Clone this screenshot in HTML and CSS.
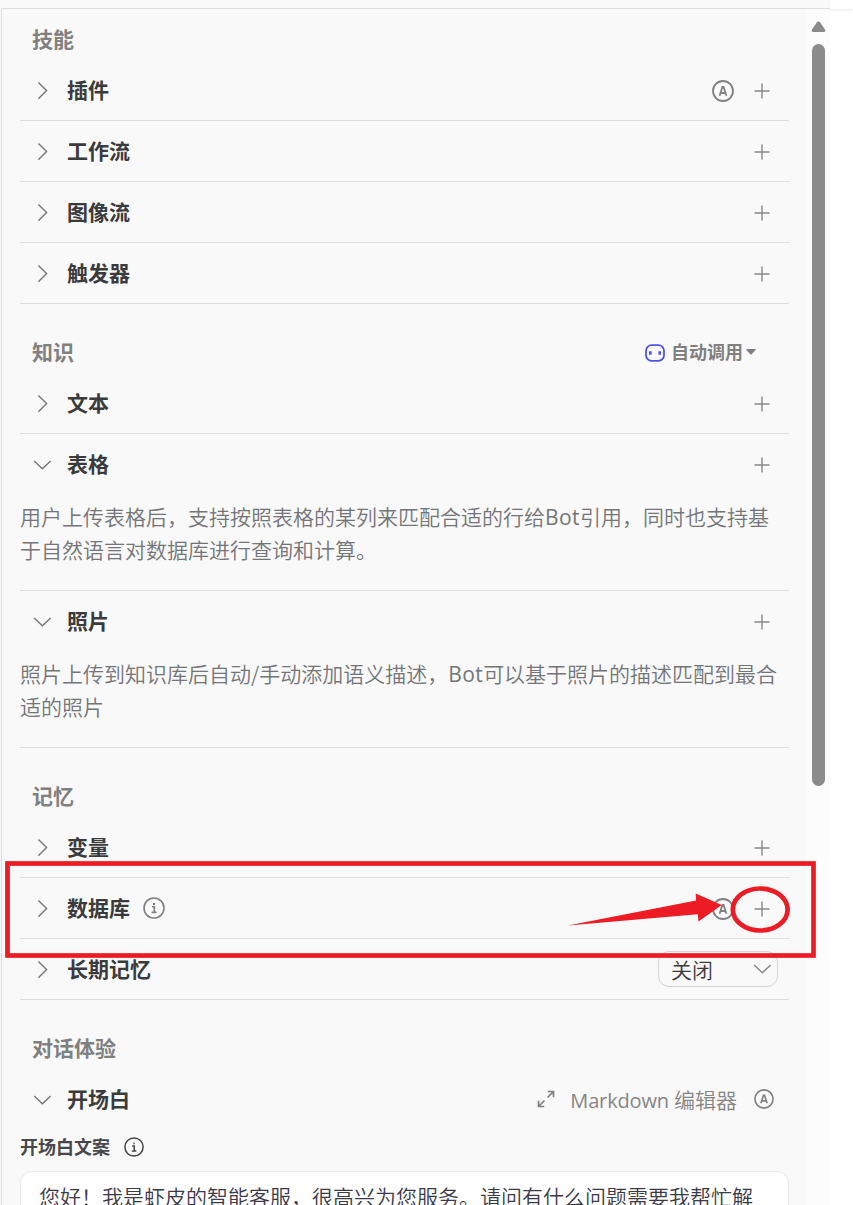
FILE: index.html
```html
<!DOCTYPE html>
<html lang="zh-CN">
<head>
<meta charset="utf-8">
<title>Bot 编排</title>
<link rel="stylesheet" href="styles.css">
</head>
<body>
<svg class="defs" width="0" height="0">
  <symbol id="right" viewBox="0 0 20 20"><path d="M6.4 1.4l8.2 8.2-8.2 8.2"/></symbol>
  <symbol id="down" viewBox="0 0 20 20"><path d="M2.2 5.9l8.2 7.8 8.2-7.8"/></symbol>
  <symbol id="plus" viewBox="0 0 16 16"><path d="M8 .5v15M.5 8h15"/></symbol>
  <symbol id="auto" viewBox="0 0 22 22"><circle cx="11" cy="11" r="10"/><path d="M7.6 15.7L10.4 6.9h1.2l2.8 8.8M8.7 13h4.6"/></symbol>
  <symbol id="info" viewBox="0 0 22 22"><circle cx="11" cy="11" r="10"/><path d="M9 9.8h2.3v5.4M8.6 15.4h5"/><path class="dot" d="M10 6h2v2h-2z"/></symbol>
</svg>
<div class="app">
  <div class="panel">
    <main class="content">
      <section class="section">
        <header class="section-head"><h2>技能</h2></header>
        <div class="row"><svg class="chev"><use href="#right"/></svg><h3>插件</h3><div class="actions"><svg class="auto"><use href="#auto"/></svg><svg class="plus"><use href="#plus"/></svg></div></div>
        <div class="row"><svg class="chev"><use href="#right"/></svg><h3>工作流</h3><div class="actions"><svg class="plus"><use href="#plus"/></svg></div></div>
        <div class="row"><svg class="chev"><use href="#right"/></svg><h3>图像流</h3><div class="actions"><svg class="plus"><use href="#plus"/></svg></div></div>
        <div class="row"><svg class="chev"><use href="#right"/></svg><h3>触发器</h3><div class="actions"><svg class="plus"><use href="#plus"/></svg></div></div>
      </section>
      <section class="section">
        <header class="section-head"><h2>知识</h2>
          <div class="mode">
            <svg class="bot" viewBox="0 0 20 18"><rect x="1" y="1.2" width="18" height="15.6" rx="5.5"/><path d="M5.3 7.2v3.6M14.7 7.2v3.6"/></svg>
            <span>自动调用</span>
            <svg class="caret" viewBox="0 0 10 6"><path d="M.7 0h8.6q.8.2.2 1L5.7 5.2q-.7.7-1.4 0L.5 1q-.6-.8.2-1z"/></svg>
          </div>
        </header>
        <div class="row"><svg class="chev"><use href="#right"/></svg><h3>文本</h3><div class="actions"><svg class="plus"><use href="#plus"/></svg></div></div>
        <div class="row open"><svg class="chev"><use href="#down"/></svg><h3>表格</h3><div class="actions"><svg class="plus"><use href="#plus"/></svg></div></div>
        <p class="desc">用户上传表格后，支持按照表格的某列来匹配合适的行给<span class="latin">Bot</span>引用，同时也支持基<br>于自然语言对数据库进行查询和计算。</p>
        <div class="row open"><svg class="chev"><use href="#down"/></svg><h3>照片</h3><div class="actions"><svg class="plus"><use href="#plus"/></svg></div></div>
        <p class="desc">照片上传到知识库后自动/手动添加语义描述，<span class="latin">Bot</span>可以基于照片的描述匹配到最合<br>适的照片</p>
      </section>
      <section class="section">
        <header class="section-head"><h2>记忆</h2></header>
        <div class="row"><svg class="chev"><use href="#right"/></svg><h3>变量</h3><div class="actions"><svg class="plus"><use href="#plus"/></svg></div></div>
        <div class="row"><svg class="chev"><use href="#right"/></svg><h3>数据库</h3><svg class="info"><use href="#info"/></svg><div class="actions"><svg class="auto"><use href="#auto"/></svg><svg class="plus"><use href="#plus"/></svg></div></div>
        <div class="row"><svg class="chev"><use href="#right"/></svg><h3>长期记忆</h3><div class="select"><span>关闭</span><svg class="select-arrow"><use href="#down"/></svg></div></div>
      </section>
      <section class="section">
        <header class="section-head"><h2>对话体验</h2></header>
        <div class="row open"><svg class="chev"><use href="#down"/></svg><h3>开场白</h3>
          <div class="editor-link">
            <svg class="expand" viewBox="0 0 18 18"><path d="M10.5 7.5L16 2M10.8 1.5h5.7v5.7M7.5 10.5L2 16M1.5 10.8v5.7h5.7"/></svg>
            <span><span class="brand">Markdown</span> 编辑器</span>
            <svg class="auto small" viewBox="0 0 22 22"><use href="#auto"/></svg>
          </div>
        </div>
        <div class="field-label"><span>开场白文案</span><svg class="info dark"><use href="#info"/></svg></div>
        <div class="textbox">您好！我是虾皮的智能客服，很高兴为您服务。请问有什么问题需要我帮忙解</div>
      </section>
    </main>
    <div class="scrollbar">
      <svg class="scroll-up" viewBox="0 0 15 12"><path d="M6 1.2q1.5-1.6 3 0l5.2 7.5q.8 2-1.2 2.3H2q-2-.3-1.2-2.3z"/></svg>
      <div class="thumb"></div>
    </div>
  </div>
  <div class="gutter"></div>
  <svg class="annotation" width="853" height="1205" viewBox="0 0 853 1205">
    <rect x="7.5" y="863.5" width="806" height="92"/>
    <ellipse cx="760.2" cy="909.5" rx="27.4" ry="21"/>
    <path d="M568 925.5L696 900.5L695.7 893.5L721.7 905L698.5 921.5L697.7 914.3z"/>
  </svg>
</div>
</body>
</html>
```
FILE: styles.css
```css
* { box-sizing: border-box; }
body {
  margin: 0;
  background: #fff;
  font-family: "Noto Sans CJK SC", sans-serif;
  font-size: 21px;
  color: #3a3b3c;
}
svg { display: block; flex: none; fill: none; }
.defs { position: absolute; }
h2, h3, p { margin: 0; font-size: 21px; }
.app {
  position: relative;
  display: flex;
  width: 853px;
  height: 1205px;
  overflow: hidden;
}
.panel {
  display: flex;
  width: 830px;
  height: 1205px;
  padding: 8px 0 0 1px;
  background: #f9f9f9;
}
.content {
  width: 806px;
  height: 1197px;
  padding: 11px 18px 0 18px;
  border-top: 1px solid #dedede;
  border-left: 1px solid #dcdcdc;
  overflow: hidden;
}
.section + .section { margin-top: 29px; }
.section-head {
  display: flex;
  align-items: center;
  justify-content: space-between;
  height: 40px;
  padding: 0 33px 3px 12px;
  color: #808080;
}
.section-head h2 { font-weight: 700; line-height: 37px; }
.mode {
  display: flex;
  align-items: center;
  font-size: 18px;
  font-weight: 700;
}
.mode span { line-height: 37px; }
.bot { width: 20px; height: 18px; margin: 2px 6px 0 0; stroke: #4d53e8; stroke-width: 1.8; }
.bot path { stroke-width: 2.6; }
.caret { width: 10px; height: 6px; margin: 1px 0 0 3px; fill: #808080; }
.row {
  display: flex;
  align-items: center;
  height: 61px;
  padding: 2px 19px 0 12px;
  border-bottom: 1px solid #dedede;
}
.row.open { border-color: transparent; }
.row h3 { margin: -4px 0 0 15px; font-weight: 700; line-height: 54px; }
.chev { width: 20px; height: 20px; stroke: #777; stroke-width: 1.4; }
.actions { display: flex; align-items: center; gap: 20px; margin-left: auto; }
.plus { width: 16px; height: 16px; stroke: #888; stroke-width: 1.4; }
.auto { width: 22px; height: 22px; stroke: #808080; stroke-width: 1.8; }
.auto.small { width: 20px; height: 20px; }
.info { width: 22px; height: 22px; margin: -2px 0 0 13px; stroke: #808080; stroke-width: 1.6; }
.info.dark { width: 20px; height: 20px; margin: -1px 0 0 14px; stroke: #48484c; stroke-width: 1.7; }
.dot { fill: #777; stroke: none; }
.dark .dot { fill: #48484c; }
.desc {
  height: 96px;
  padding-top: 5px;
  border-bottom: 1px solid #dedede;
  color: #747578;
  font-weight: 350;
  line-height: 33px;
  white-space: nowrap;
}
.latin {
  font-family: "Open Sans", sans-serif;
  font-weight: 400;
  font-size: 21px;
  line-height: 1;
  letter-spacing: .4px;
}
.select {
  display: flex;
  align-items: center;
  justify-content: space-between;
  width: 120px;
  height: 36px;
  margin: -2px -8px 0 auto;
  padding: 0 5px 0 12px;
  border: 1px solid #d5d5d5;
  border-radius: 11px;
  font-weight: 350;
}
.select-arrow { width: 20px; height: 20px; stroke: #888; stroke-width: 1.4; }
.editor-link {
  display: flex;
  align-items: center;
  margin: -2px -4px 0 auto;
  color: #858585;
  font-weight: 350;
}
.editor-link > span { margin: 0 17px 0 15px; }
.brand {
  display: inline-block;
  width: 99px;
  font-family: "Open Sans", sans-serif;
  font-weight: 400;
  font-size: 20px;
  letter-spacing: -.15px;
  line-height: 1;
}
.expand { width: 18px; height: 18px; stroke: #808080; stroke-width: 1.7; }
.field-label {
  display: flex;
  align-items: center;
  height: 35px;
  font-size: 18px;
  font-weight: 700;
  color: #48484c;
}
.field-label span { margin-top: -3px; }
.textbox {
  height: 34px;
  margin-top: 6px;
  padding: 8px 18px 0;
  border: 1px solid #e9e9e9;
  border-bottom: 0;
  border-radius: 12px 12px 0 0;
  background: #fff;
  color: #3c3a49;
  font-weight: 350;
  line-height: 33px;
  white-space: nowrap;
}
.scrollbar {
  width: 23px;
  padding: 12px 0 0 4px;
  border-top: 1px solid #dedede;
  background: #fcfcfc;
}
.scroll-up { width: 15px; height: 12px; fill: #8b8b8b; }
.thumb { width: 13px; height: 742px; margin: 11px 0 0 1px; border-radius: 7px; background: #8b8b8b; }
.gutter { width: 23px; height: 9px; box-shadow: 0 1px 3px #e8e8e8; }
.annotation { position: absolute; left: 0; top: 0; stroke: #ed1c24; stroke-width: 4.7; }
.annotation path { fill: #ed1c24; stroke: none; }
```
